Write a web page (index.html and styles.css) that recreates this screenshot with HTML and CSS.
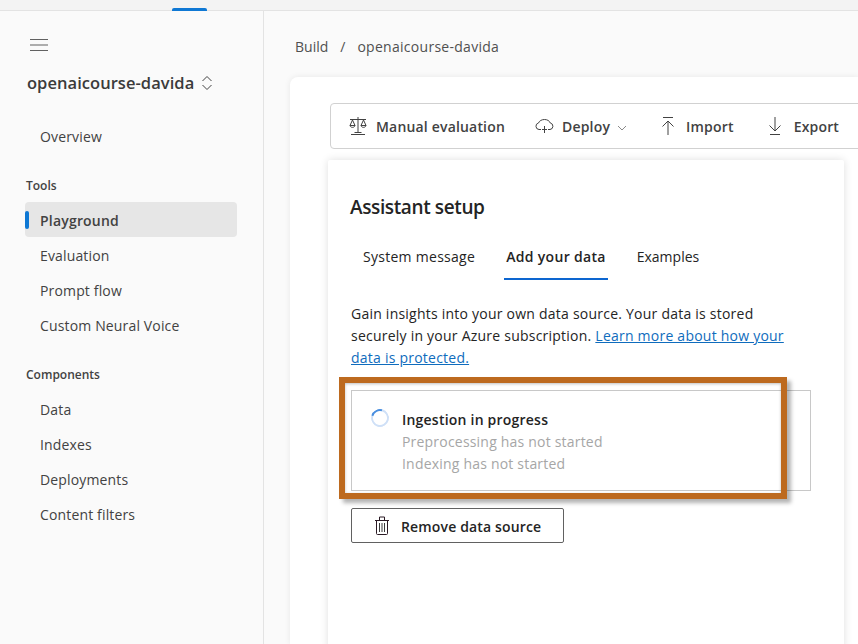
FILE: index.html
```html
<!DOCTYPE html>
<html lang="en">
<head>
<meta charset="utf-8">
<title>Assistant setup</title>
<link rel="stylesheet" href="styles.css">
</head>
<body>
<header class="topbar"><span class="topbar-mark"></span></header>
<div class="shell">
  <nav class="sidebar">
    <svg class="menu-icon" width="18" height="12" viewBox="0 0 18 12"><path d="M0 .5h18M0 6h18M0 11.500h18" stroke="#616161" fill="none"/></svg>
    <div class="project"><span>openaicourse-davida</span>
      <svg width="12" height="16" viewBox="0 0 12 16"><path d="M1.500 6 6 1.500 10.500 6M1.500 10 6 14.500 10.500 10" stroke="#424242" fill="none"/></svg>
    </div>
    <a class="nav-item overview">Overview</a>
    <div class="nav-heading">Tools</div>
    <a class="nav-item active">Playground</a>
    <a class="nav-item">Evaluation</a>
    <a class="nav-item">Prompt flow</a>
    <a class="nav-item">Custom Neural Voice</a>
    <div class="nav-heading second">Components</div>
    <a class="nav-item">Data</a>
    <a class="nav-item">Indexes</a>
    <a class="nav-item">Deployments</a>
    <a class="nav-item">Content filters</a>
  </nav>
  <main class="main">
    <div class="breadcrumb"><span>Build</span><span class="sep">/</span><span class="crumb">openaicourse-davida</span></div>
    <section class="page-card">
      <div class="toolbar">
        <button class="tool">
          <svg width="18" height="18" viewBox="0 0 18 18" fill="none" stroke="#424242"><path d="M1 2.500h16M9 0v15M2 17.500h14M5.500 15.500h7M3.500 3 1 8.500h5ZM14.500 3 12 8.500h5ZM1 8.500c.5 2.500 4.500 2.500 5 0M12 8.500c.5 2.500 4.500 2.500 5 0"/></svg>
          Manual evaluation</button>
        <button class="tool tool-deploy">
          <svg width="19" height="14" viewBox="0 0 19 14" fill="none" stroke="#424242"><path d="M6 10.500H4a3.300 3.300 0 0 1-.5-6.500C4.300 1.800 6.800.5 9.500.5s5 1.300 5.800 3.500a3.300 3.300 0 0 1-.3 6.500h-2M9.500 7v7M7 10.500h5"/></svg>
          Deploy
          <svg class="chev" width="10" height="6" viewBox="0 0 10 6" fill="none" stroke="#8a8a8a"><path d="m1 1 4 4 4-4"/></svg></button>
        <button class="tool tool-import">
          <svg width="12" height="18" viewBox="0 0 12 18" fill="none" stroke="#424242"><path d="M1 .5h10M6 18V4M.5 9.500 6 4l5.500 5.500"/></svg>
          Import</button>
        <button class="tool tool-export">
          <svg width="12" height="18" viewBox="0 0 12 18" fill="none" stroke="#424242"><path d="M1 17.500h10M6 0v14M.5 8.500 6 14l5.500-5.500"/></svg>
          Export</button>
      </div>
      <section class="panel">
        <h2 class="panel-title">Assistant setup</h2>
        <div class="tabs">
          <span class="tab">System message</span>
          <span class="tab selected">Add your data</span>
          <span class="tab last">Examples</span>
        </div>
        <p class="intro">Gain insights into your own data source. Your data is stored securely in your Azure subscription. <a href="#">Learn more about how your data is protected.</a></p>
        <div class="status-box">
          <span class="spinner"></span>
          <div class="status-text">
            <strong>Ingestion in progress</strong>
            <span>Preprocessing has not started</span>
            <span>Indexing has not started</span>
          </div>
          <div class="highlight"></div>
        </div>
        <button class="remove">
          <svg width="14" height="19" viewBox="0 0 14 19" fill="none"><path d="M0 4.500h14M4.500 4V1h5v3M1.500 4.500V17.500a1 1 0 0 0 1 1h9a1 1 0 0 0 1-1V4.500" stroke="#2a1a24"/><path d="M4.500 7v9M7 7v9M9.500 7v9" stroke="#3a3a3a"/></svg>
          Remove data source</button>
      </section>
    </section>
  </main>
</div>
</body>
</html>
```
FILE: styles.css
```css
* { box-sizing: border-box; }
html, body { height: 100%; }
body {
  margin: 0;
  height: 644px;
  overflow: hidden;
  background: #fafafa;
  color: #424242;
  font: 14px/20px "Open Sans", "Noto Sans", sans-serif;
  display: flex;
  flex-direction: column;
}
.topbar {
  height: 11px;
  flex: none;
  background: #f3f3f3;
  border-bottom: 1px solid #e3e3e3;
  padding-left: 172px;
}
.topbar-mark { display: block; width: 35px; height: 3px; margin-top: 8px; background: #0f78d4; border-radius: 2px 2px 0 0; }
.shell { flex: 1; display: flex; min-height: 0; }
.sidebar {
  width: 264px;
  flex: none;
  border-right: 1px solid #e3e3e3;
  padding: 28px 26px 0 25px;
  display: flex;
  flex-direction: column;
}
.menu-icon { margin: 0 0 0 5px; display: block; }
.project {
  display: flex;
  align-items: center;
  gap: 7px;
  margin: 20px 0 0 2px;
  height: 24px;
  font-size: 16.500px;
  font-weight: 600;
  letter-spacing: .05px;
  color: #3b3b3b;
}
.nav-item {
  display: flex;
  align-items: center;
  height: 35px;
  padding-left: 15px;
  letter-spacing: .15px;
  color: #424242;
}
.overview { margin-top: 24px; }
.nav-heading { margin: 24px 0 8px 1px; font-size: 12px; line-height: 16px; font-weight: 600; color: #424242; }
.nav-heading.second { margin-top: 24px; margin-bottom: 9px; }
.active {
  position: relative;
  margin-bottom: 1px;
  padding-top: 2px;
  background: #e6e6e6;
  border-radius: 4px;
  font-weight: 600;
  letter-spacing: .2px;
}
.active::before {
  content: "";
  position: absolute;
  left: 0;
  top: 9px;
  width: 4px;
  height: 18px;
  background: #0f78d4;
  border-radius: 2px;
}
.main { flex: 1; min-width: 0; padding: 0 0 0 26px; display: flex; flex-direction: column; }
.breadcrumb {
  height: 66px;
  flex: none;
  padding: 26px 0 0 5px;
  display: flex;
  gap: 12px;
  color: #505050;
}
.crumb { letter-spacing: .28px; }
.page-card {
  flex: 1;
  min-height: 0;
  background: #fff;
  border-radius: 8px 0 0 0;
  box-shadow: 0 0 6px rgba(0,0,0,.08);
  padding: 26px 0 0 38px;
}
.toolbar {
  height: 46px;
  width: 540px;
  margin-left: 2px;
  display: flex;
  align-items: center;
  padding-left: 18px;
  border: 1px solid #d1d1d1;
  border-radius: 4px 0 0 4px;
}
.tool {
  display: flex;
  align-items: center;
  gap: 9px;
  border: 0;
  padding: 2px 0 0;
  background: none;
  font: 600 14px/20px "Open Sans", "Noto Sans", sans-serif;
  letter-spacing: .18px;
  color: #424242;
}
.tool svg { margin-top: -2px; }
.tool .chev { margin-left: -1px; margin-top: 2px; }
.tool-deploy { margin-left: 30px; gap: 8px; }
.tool-import { margin-left: 35px; gap: 12px; }
.tool-export { margin-left: 35px; gap: 13px; }
.panel {
  width: 516px;
  height: 490px;
  margin-top: 11px;
  background: #fff;
  box-shadow: 0 0 8px rgba(0,0,0,.13);
  padding: 34px 0 0 22px;
  border-radius: 2px 2px 0 0;
}
.panel-title { margin: 0; font-size: 19px; line-height: 27px; font-weight: 600; letter-spacing: -.38px; color: #242424; }
.tabs { display: flex; margin-top: 20px; height: 39px; color: #242424; }
.tab { padding: 6px 0 0 13px; letter-spacing: .28px; }
.tab.selected {
  margin-left: 29px;
  padding: 6px 2px 0;
  font-weight: 600;
  letter-spacing: .32px;
  border-bottom: 2px solid #0d66d0;
}
.tab.last { margin-left: 16px; padding-left: 13px; letter-spacing: 0; }
.intro { margin: 23px 0 0 1px; width: 440px; line-height: 22px; letter-spacing: .23px; color: #242424; }
.intro a { color: #0f6cbd; }
.status-box {
  position: relative;
  width: 460px;
  height: 101px;
  margin: 21px 0 17px 1px;
  border: 1px solid #c8c8c8;
  padding: 18px 0 0 19px;
  display: flex;
  gap: 13px;
}
.spinner { width: 18px; height: 18px; border-radius: 50%; border: 2px solid #cfe0f7; border-top-color: #4a8fe0; transform: rotate(-30deg); flex: none; }
.status-text { display: flex; flex-direction: column; line-height: 22px; letter-spacing: .2px; color: #a6a6a6; }
.status-text strong { font-weight: 600; color: #242424; letter-spacing: .22px; }
.highlight {
  position: absolute;
  left: -13px;
  top: -14px;
  width: 448px;
  height: 122px;
  border: 6px solid #bd6a1f;
  box-shadow: 4px 4px 4px rgba(0,0,0,.3), inset 0 1px 3px rgba(0,0,0,.25);
}
.remove {
  display: flex;
  align-items: center;
  gap: 12px;
  width: 213px;
  height: 35px;
  margin-left: 1px;
  padding: 2px 0 0 23px;
  background: #fff;
  border: 1px solid #616161;
  border-radius: 2px;
  font: 600 14px/20px "Open Sans", "Noto Sans", sans-serif;
  letter-spacing: .15px;
  color: #242424;
}
.remove svg { margin-top: -2px; }
```
